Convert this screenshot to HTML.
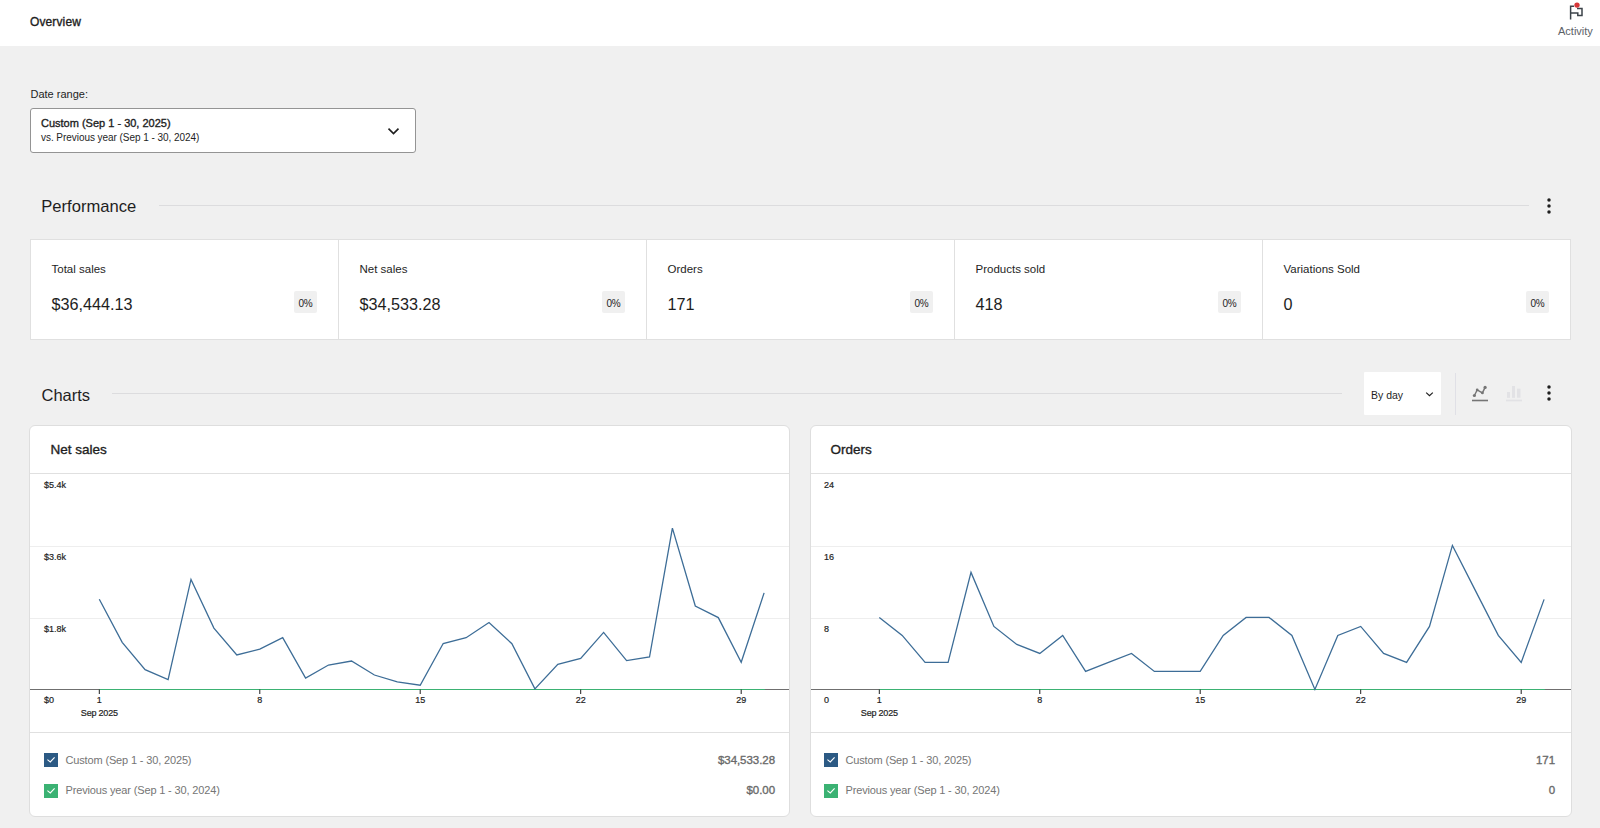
<!DOCTYPE html><html><head><meta charset="utf-8"><style>
*{box-sizing:border-box;margin:0;padding:0}
html,body{width:1600px;height:828px;overflow:hidden;background:#f0f0f0;font-family:"Liberation Sans",sans-serif;color:#1e1e1e}
.a{position:absolute;white-space:nowrap;line-height:1}
#hdr{position:absolute;left:0;top:0;width:1600px;height:46px;background:#fff}
.box{position:absolute;background:#fff}
.hl{position:absolute;height:1px;background:#dcdcde}
.cell{position:absolute;top:0;height:99px;border-right:1px solid #e0e0e0}
.badge{position:absolute;width:23px;height:22px;background:#f0f0f0;border-radius:2px;font-size:10px;line-height:26px;text-align:center;color:#1e1e1e;letter-spacing:-0.2px}
.card{position:absolute;top:425px;height:392px;background:#fff;border:1px solid #dedede;border-radius:6px}
.sb{font-weight:normal;-webkit-text-stroke:0.35px currentColor}
.cb{position:absolute;width:14px;height:14px}
.lg{font-size:11px;color:#757575;letter-spacing:-0.15px}
.lv{font-size:11.5px;font-weight:normal;-webkit-text-stroke:0.35px currentColor;color:#6a6a6a;text-align:right;width:300px;letter-spacing:-0.05px}
</style></head><body>
<div id="hdr"></div>
<div class="a sb" style="left:30px;top:15.5px;font-size:12px;letter-spacing:0.12px">Overview</div>
<svg style="position:absolute;left:1560px;top:0" width="40" height="24" viewBox="1560 0 40 24">
<path d="M1570.6 19.6 V6.2 H1574 M1577 8.6 H1582 V15.4 H1577.8 V13 H1570.6" fill="none" stroke="#3c434a" stroke-width="1.5"/>
<circle cx="1577" cy="5.1" r="2.7" fill="#d63638"/></svg>
<div class="a" style="left:1558px;top:25.5px;font-size:11px;color:#5b6167">Activity</div>
<div class="a" style="left:30.5px;top:89.2px;font-size:11px">Date range:</div>
<div class="box" style="left:30px;top:108px;width:386px;height:45px;border:1px solid #949494;border-radius:3px"></div>
<div class="a sb" style="left:41px;top:118.2px;font-size:11px;letter-spacing:0px">Custom (Sep 1 - 30, 2025)</div>
<div class="a" style="left:41px;top:132.5px;font-size:10px;letter-spacing:-0.05px">vs. Previous year (Sep 1 - 30, 2024)</div>
<svg style="position:absolute;left:380px;top:120px" width="30" height="24"><path d="M8.5 8.6 L13.5 13.6 L18.5 8.6" fill="none" stroke="#1e1e1e" stroke-width="1.6"/></svg>
<div class="a" style="left:41.3px;top:198.9px;font-size:16.6px">Performance</div>
<div class="hl" style="left:159px;top:205px;width:1370px"></div>
<svg style="position:absolute;left:1545.8px;top:197.2px" width="6" height="6"><circle cx="3" cy="3" r="1.75" fill="#1e1e1e"/></svg><svg style="position:absolute;left:1545.8px;top:203.2px" width="6" height="6"><circle cx="3" cy="3" r="1.75" fill="#1e1e1e"/></svg><svg style="position:absolute;left:1545.8px;top:209.1px" width="6" height="6"><circle cx="3" cy="3" r="1.75" fill="#1e1e1e"/></svg>
<div class="box" style="left:30px;top:239px;width:1541px;height:101px;border:1px solid #e0e0e0">
 <div class="cell" style="left:0;width:308px"></div><div class="cell" style="left:308px;width:308px"></div><div class="cell" style="left:616px;width:308px"></div><div class="cell" style="left:924px;width:308px"></div></div>
<div class="a" style="left:51.5px;top:263.5px;font-size:11.5px">Total sales</div>
<div class="a" style="left:51.5px;top:296.4px;font-size:16.2px">$36,444.13</div>
<div class="badge" style="left:294px;top:291px">0%</div>
<div class="a" style="left:359.5px;top:263.5px;font-size:11.5px">Net sales</div>
<div class="a" style="left:359.5px;top:296.4px;font-size:16.2px">$34,533.28</div>
<div class="badge" style="left:602px;top:291px">0%</div>
<div class="a" style="left:667.5px;top:263.5px;font-size:11.5px">Orders</div>
<div class="a" style="left:667.5px;top:296.4px;font-size:16.2px">171</div>
<div class="badge" style="left:910px;top:291px">0%</div>
<div class="a" style="left:975.5px;top:263.5px;font-size:11.5px">Products sold</div>
<div class="a" style="left:975.5px;top:296.4px;font-size:16.2px">418</div>
<div class="badge" style="left:1218px;top:291px">0%</div>
<div class="a" style="left:1283.5px;top:263.5px;font-size:11.5px">Variations Sold</div>
<div class="a" style="left:1283.5px;top:296.4px;font-size:16.2px">0</div>
<div class="badge" style="left:1526px;top:291px">0%</div>
<div class="a" style="left:41.5px;top:386.5px;font-size:16.5px">Charts</div>
<div class="hl" style="left:112px;top:393px;width:1230px"></div>
<div class="box" style="left:1364px;top:372px;width:77px;height:43px;border-radius:1px"></div>
<div class="a" style="left:1371px;top:390px;font-size:10.5px">By day</div>
<svg style="position:absolute;left:1420px;top:386px" width="20" height="14"><path d="M6.2 6.6 L9.5 9.7 L12.8 6.6" fill="none" stroke="#1e1e1e" stroke-width="1.2"/></svg>
<div style="position:absolute;left:1455px;top:373px;width:1px;height:42px;background:#e0e0e6"></div>
<svg style="position:absolute;left:1468px;top:383px" width="24" height="22" viewBox="1468 383 24 22">
<path d="M1472 400.5 H1488" stroke="#757575" stroke-width="1.6"/>
<path d="M1474.4 395.5 L1477.2 389.9 L1482.4 392.9 L1485.1 387.4" fill="none" stroke="#757575" stroke-width="1.4"/>
<circle cx="1474.4" cy="395.5" r="1.6" fill="#757575"/><circle cx="1477.2" cy="389.9" r="1.4" fill="#757575"/><circle cx="1482.4" cy="392.9" r="1.4" fill="#757575"/><circle cx="1485.1" cy="387.4" r="1.6" fill="#757575"/>
</svg>
<svg style="position:absolute;left:1502px;top:383px" width="24" height="22" viewBox="1502 383 24 22">
<path d="M1506 400.5 H1522" stroke="#e2e2e5" stroke-width="1.6"/>
<rect x="1507" y="392" width="3" height="5.8" fill="#e2e2e5"/><rect x="1512" y="386" width="3" height="11.8" fill="#e2e2e5"/><rect x="1517" y="388.7" width="3.5" height="9" fill="#e2e2e5"/>
</svg>
<svg style="position:absolute;left:1545.6px;top:384.3px" width="6" height="6"><circle cx="3" cy="3" r="1.75" fill="#1e1e1e"/></svg><svg style="position:absolute;left:1545.6px;top:390.3px" width="6" height="6"><circle cx="3" cy="3" r="1.75" fill="#1e1e1e"/></svg><svg style="position:absolute;left:1545.6px;top:396.3px" width="6" height="6"><circle cx="3" cy="3" r="1.75" fill="#1e1e1e"/></svg>
<div class="card" style="left:29px;width:761px"></div>
<div class="a sb" style="left:50.5px;top:443.2px;font-size:13.5px">Net sales</div>
<svg style="position:absolute;left:0;top:0" width="1600" height="828">
<path d="M30 473.5 H789" stroke="#e0e0e0" stroke-width="1"/>
<path d="M30 546.5 H789 M30 618.5 H789" stroke="#eeeeee" stroke-width="1"/>
<path d="M30 732.5 H789" stroke="#e0e0e0" stroke-width="1"/>
<text x="44.1" y="487.6" font-size="9" fill="#1e1e1e" stroke="#1e1e1e" stroke-width="0.2" font-family="Liberation Sans">$5.4k</text>
<text x="44.1" y="559.6" font-size="9" fill="#1e1e1e" stroke="#1e1e1e" stroke-width="0.2" font-family="Liberation Sans">$3.6k</text>
<text x="44.1" y="631.6" font-size="9" fill="#1e1e1e" stroke="#1e1e1e" stroke-width="0.2" font-family="Liberation Sans">$1.8k</text>
<text x="44.1" y="703.3" font-size="9" fill="#1e1e1e" stroke="#1e1e1e" stroke-width="0.2" font-family="Liberation Sans">$0</text>
<path d="M30 689.5 H789" stroke="#6f6f6f" stroke-width="1"/>
<path d="M99.3 689.5 H764.9" stroke="#3bb273" stroke-width="1.1"/>
<path d="M99.3 689.5 V694" stroke="#1e1e1e" stroke-width="1"/>
<text x="99.3" y="703" font-size="9" text-anchor="middle" fill="#1e1e1e" stroke="#1e1e1e" stroke-width="0.2" font-family="Liberation Sans">1</text>
<path d="M259.8 689.5 V694" stroke="#1e1e1e" stroke-width="1"/>
<text x="259.8" y="703" font-size="9" text-anchor="middle" fill="#1e1e1e" stroke="#1e1e1e" stroke-width="0.2" font-family="Liberation Sans">8</text>
<path d="M420.2 689.5 V694" stroke="#1e1e1e" stroke-width="1"/>
<text x="420.2" y="703" font-size="9" text-anchor="middle" fill="#1e1e1e" stroke="#1e1e1e" stroke-width="0.2" font-family="Liberation Sans">15</text>
<path d="M580.7 689.5 V694" stroke="#1e1e1e" stroke-width="1"/>
<text x="580.7" y="703" font-size="9" text-anchor="middle" fill="#1e1e1e" stroke="#1e1e1e" stroke-width="0.2" font-family="Liberation Sans">22</text>
<path d="M741.2 689.5 V694" stroke="#1e1e1e" stroke-width="1"/>
<text x="741.2" y="703" font-size="9" text-anchor="middle" fill="#1e1e1e" stroke="#1e1e1e" stroke-width="0.2" font-family="Liberation Sans">29</text>
<text x="99.3" y="715.6" font-size="9" text-anchor="middle" fill="#1e1e1e" stroke="#1e1e1e" stroke-width="0.2" font-family="Liberation Sans" letter-spacing="-0.2">Sep 2025</text>
<polyline points="99.3,599.2 122.2,642.3 145.1,669.6 168.1,679.7 191.0,579.4 213.9,628.1 236.8,655.0 259.8,649.1 282.7,637.6 305.6,678.1 328.5,665.0 351.5,661.0 374.4,675.0 397.3,681.9 420.2,685.2 443.2,643.5 466.1,637.7 489.0,622.5 511.9,643.7 534.9,688.9 557.8,664.3 580.7,658.5 603.6,632.4 626.6,660.6 649.5,657.0 672.4,528.1 695.3,606.0 718.3,617.6 741.2,662.3 764.1,592.9" fill="none" stroke="#3d6d97" stroke-width="1.3" stroke-linejoin="miter"/>
</svg>
<div class="cb" style="left:44px;top:753px;background:#2c5a84"><svg width="14" height="14"><path d="M3.4 6.6 L6.3 9 L10.6 4.4" fill="none" stroke="#fff" stroke-width="1.1"/></svg></div>
<div class="cb" style="left:44px;top:784px;background:#3bb273"><svg width="14" height="14"><path d="M3.4 6.6 L6.3 9 L10.6 4.4" fill="none" stroke="#fff" stroke-width="1.1"/></svg></div>
<div class="a lg" style="left:65.5px;top:755.2px">Custom (Sep 1 - 30, 2025)</div>
<div class="a lg" style="left:65.5px;top:785.2px">Previous year (Sep 1 - 30, 2024)</div>
<div class="a lv" style="left:475px;top:755.1px">$34,533.28</div>
<div class="a lv" style="left:475px;top:785.1px">$0.00</div>
<div class="card" style="left:810px;width:762px"></div>
<div class="a sb" style="left:830.5px;top:443.2px;font-size:13.5px">Orders</div>
<svg style="position:absolute;left:0;top:0" width="1600" height="828">
<path d="M811 473.5 H1571" stroke="#e0e0e0" stroke-width="1"/>
<path d="M811 546.5 H1571 M811 618.5 H1571" stroke="#eeeeee" stroke-width="1"/>
<path d="M811 732.5 H1571" stroke="#e0e0e0" stroke-width="1"/>
<text x="824.1" y="487.6" font-size="9" fill="#1e1e1e" stroke="#1e1e1e" stroke-width="0.2" font-family="Liberation Sans">24</text>
<text x="824.1" y="559.6" font-size="9" fill="#1e1e1e" stroke="#1e1e1e" stroke-width="0.2" font-family="Liberation Sans">16</text>
<text x="824.1" y="631.6" font-size="9" fill="#1e1e1e" stroke="#1e1e1e" stroke-width="0.2" font-family="Liberation Sans">8</text>
<text x="824.1" y="703.3" font-size="9" fill="#1e1e1e" stroke="#1e1e1e" stroke-width="0.2" font-family="Liberation Sans">0</text>
<path d="M811 689.5 H1571" stroke="#6f6f6f" stroke-width="1"/>
<path d="M879.3 689.5 H1544.9" stroke="#3bb273" stroke-width="1.1"/>
<path d="M879.3 689.5 V694" stroke="#1e1e1e" stroke-width="1"/>
<text x="879.3" y="703" font-size="9" text-anchor="middle" fill="#1e1e1e" stroke="#1e1e1e" stroke-width="0.2" font-family="Liberation Sans">1</text>
<path d="M1039.8 689.5 V694" stroke="#1e1e1e" stroke-width="1"/>
<text x="1039.8" y="703" font-size="9" text-anchor="middle" fill="#1e1e1e" stroke="#1e1e1e" stroke-width="0.2" font-family="Liberation Sans">8</text>
<path d="M1200.2 689.5 V694" stroke="#1e1e1e" stroke-width="1"/>
<text x="1200.2" y="703" font-size="9" text-anchor="middle" fill="#1e1e1e" stroke="#1e1e1e" stroke-width="0.2" font-family="Liberation Sans">15</text>
<path d="M1360.7 689.5 V694" stroke="#1e1e1e" stroke-width="1"/>
<text x="1360.7" y="703" font-size="9" text-anchor="middle" fill="#1e1e1e" stroke="#1e1e1e" stroke-width="0.2" font-family="Liberation Sans">22</text>
<path d="M1521.2 689.5 V694" stroke="#1e1e1e" stroke-width="1"/>
<text x="1521.2" y="703" font-size="9" text-anchor="middle" fill="#1e1e1e" stroke="#1e1e1e" stroke-width="0.2" font-family="Liberation Sans">29</text>
<text x="879.3" y="715.6" font-size="9" text-anchor="middle" fill="#1e1e1e" stroke="#1e1e1e" stroke-width="0.2" font-family="Liberation Sans" letter-spacing="-0.2">Sep 2025</text>
<polyline points="879.3,617.4 902.2,635.4 925.1,662.4 948.1,662.4 971.0,572.4 993.9,626.4 1016.8,644.4 1039.8,653.4 1062.7,635.4 1085.6,671.4 1108.5,662.4 1131.5,653.4 1154.4,671.4 1177.3,671.4 1200.2,671.4 1223.2,635.4 1246.1,617.4 1269.0,617.4 1291.9,635.4 1314.9,689.4 1337.8,635.4 1360.7,626.4 1383.6,653.4 1406.6,662.4 1429.5,626.4 1452.4,545.4 1475.3,590.4 1498.3,635.4 1521.2,662.4 1544.1,599.4" fill="none" stroke="#3d6d97" stroke-width="1.3" stroke-linejoin="miter"/>
</svg>
<div class="cb" style="left:824px;top:753px;background:#2c5a84"><svg width="14" height="14"><path d="M3.4 6.6 L6.3 9 L10.6 4.4" fill="none" stroke="#fff" stroke-width="1.1"/></svg></div>
<div class="cb" style="left:824px;top:784px;background:#3bb273"><svg width="14" height="14"><path d="M3.4 6.6 L6.3 9 L10.6 4.4" fill="none" stroke="#fff" stroke-width="1.1"/></svg></div>
<div class="a lg" style="left:845.5px;top:755.2px">Custom (Sep 1 - 30, 2025)</div>
<div class="a lg" style="left:845.5px;top:785.2px">Previous year (Sep 1 - 30, 2024)</div>
<div class="a lv" style="left:1255px;top:755.1px">171</div>
<div class="a lv" style="left:1255px;top:785.1px">0</div>
</body></html>
